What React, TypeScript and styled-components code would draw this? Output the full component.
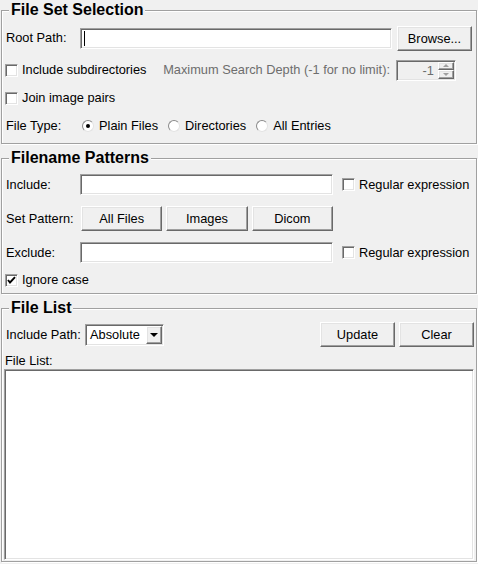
import React from "react";
import styled, { createGlobalStyle } from "styled-components";

const Global = createGlobalStyle`
  html, body { margin: 0; padding: 0; background: #f0f0f0; }
  body {
    font-family: "Liberation Sans", Arial, sans-serif;
    font-size: 12.8px;
    color: #000;
  }
  * { box-sizing: border-box; }
`;

const Page = styled.div`
  width: 478px;
  height: 564px;
  padding: 0 1px;
  display: flex;
  flex-direction: column;
  gap: 4px;
  background: #f0f0f0;
  overflow: hidden;
`;

const Group = styled.fieldset<{ $px: number; $pt: number; $pb: number }>`
  margin: 0;
  min-width: 0;
  padding: ${(p) => `${p.$pt}px ${p.$px}px ${p.$pb}px ${p.$px}px`};
  border: 1px solid #a0a0a0;
  box-shadow: inset 1px 1px #fff, 1px 1px #fff;
`;

const Title = styled.legend<{ $px: number }>`
  margin-left: ${(p) => 7 - p.$px}px;
  padding: 0 2px;
  font-family: "Liberation Sans", Arial, sans-serif;
  font-weight: bold;
  font-size: 16px;
  line-height: 20px;
  background: #f0f0f0;
`;

const Row = styled.div<{ $h: number; $mt?: number; $gap?: number }>`
  display: flex;
  align-items: center;
  height: ${(p) => p.$h}px;
  margin-top: ${(p) => p.$mt ?? 0}px;
  gap: ${(p) => p.$gap ?? 0}px;
`;

const Label = styled.span<{ $w?: number; $pl?: number }>`
  flex: none;
  width: ${(p) => (p.$w ? `${p.$w}px` : "auto")};
  padding-left: ${(p) => p.$pl ?? 0}px;
  white-space: nowrap;
  line-height: 16px;
`;

const DimLabel = styled.span`
  margin-left: auto;
  white-space: nowrap;
  color: #6d6d6d;
  line-height: 16px;
`;

const Sunken = `
  border: 1px solid;
  border-color: #a0a0a0 #fff #fff #a0a0a0;
  box-shadow: inset 1px 1px #696969, inset -1px -1px #e3e3e3;
`;

const Raised = `
  border: 1px solid;
  border-color: #fff #696969 #696969 #fff;
  box-shadow: inset -1px -1px #a0a0a0, inset 1px 1px #e3e3e3;
`;

const Field = styled.div<{ $w?: number }>`
  flex: ${(p) => (p.$w ? `0 0 ${p.$w}px` : "1 1 auto")};
  height: 21px;
  background: #fff;
  ${Sunken}
  display: flex;
  align-items: center;
  padding-left: 3px;
`;

const Caret = styled.span`
  width: 1px;
  height: 15px;
  background: #000;
`;

const Button = styled.button<{ $w?: number }>`
  flex: ${(p) => (p.$w ? `0 0 ${p.$w}px` : "1 1 0")};
  height: 25px;
  padding: 0;
  margin: 0;
  font: inherit;
  color: #000;
  background: #f0f0f0;
  ${Raised}
`;

const ButtonSet = styled.div`
  display: flex;
  gap: 4px;
  width: 252px;
  margin-left: 1px;
`;

const CheckItem = styled.label<{ $ml?: number }>`
  display: flex;
  align-items: center;
  gap: 4px;
  margin-left: ${(p) => p.$ml ?? -1}px;
  white-space: nowrap;
  line-height: 16px;
`;

const Box = styled.span`
  flex: none;
  width: 13px;
  height: 13px;
  background: #fff;
  ${Sunken}
  display: grid;
  place-items: center;
`;

const RadioGroup = styled.div`
  display: flex;
  align-items: center;
  gap: 10px;
  margin-left: 2px;
`;

const RadioItem = styled.label`
  display: flex;
  align-items: center;
  gap: 5px;
  white-space: nowrap;
  line-height: 16px;
`;

const RadioCircle = styled.span`
  flex: none;
  width: 12px;
  height: 12px;
  border-radius: 50%;
  background: #fff;
  border: 1px solid;
  border-color: #8a8a8a #e3e3e3 #e3e3e3 #8a8a8a;
  display: grid;
  place-items: center;
`;

const Dot = styled.span`
  width: 4px;
  height: 4px;
  border-radius: 50%;
  background: #000;
`;

const Spin = styled.div`
  flex: none;
  display: flex;
  width: 60px;
  height: 21px;
  margin: 0 16px 0 6px;
  background: #f0f0f0;
  ${Sunken}
  padding: 1px;
`;

const SpinText = styled.span`
  flex: 1;
  text-align: right;
  color: #6d6d6d;
  padding-right: 4px;
  line-height: 17px;
`;

const SpinButtons = styled.div`
  flex: none;
  width: 16px;
  display: flex;
  flex-direction: column;
`;

const SpinButton = styled.div`
  flex: 1;
  display: grid;
  place-items: center;
  background: #f0f0f0;
  ${Raised}
`;

const Arrow = styled.span<{ $dir: "up" | "down"; $color: string; $size: number }>`
  width: 0;
  height: 0;
  border-left: ${(p) => p.$size}px solid transparent;
  border-right: ${(p) => p.$size}px solid transparent;
  ${(p) =>
    p.$dir === "up"
      ? `border-bottom: ${p.$size}px solid ${p.$color};`
      : `border-top: ${p.$size}px solid ${p.$color};`}
`;

const Combo = styled.div`
  flex: none;
  width: 79px;
  height: 22px;
  display: flex;
  align-items: center;
  background: #fff;
  ${Sunken}
  padding: 1px;
`;

const ComboText = styled.span`
  flex: 1;
  padding-left: 3px;
  line-height: 16px;
`;

const ComboButton = styled.div`
  flex: none;
  width: 16px;
  height: 18px;
  display: grid;
  place-items: center;
  background: #f0f0f0;
  ${Raised}
`;

const Spacer = styled.div`
  flex: 1;
`;

const Caption = styled.div`
  margin-top: 6px;
  padding-left: 1px;
  line-height: 16px;
`;

const ListBox = styled.div`
  height: 191px;
  background: #fff;
  ${Sunken}
`;

function Check({ checked }: { checked?: boolean }) {
  return (
    <Box>
      {checked && (
        <svg width="9" height="9" viewBox="0 0 9 9">
          <polyline points="1,4 3,6.5 8,1.2" fill="none" stroke="#000" strokeWidth="1.9" />
        </svg>
      )}
    </Box>
  );
}

function Radio({ on, children }: { on?: boolean; children: React.ReactNode }) {
  return (
    <RadioItem>
      <RadioCircle>{on && <Dot />}</RadioCircle>
      {children}
    </RadioItem>
  );
}

export default function App() {
  return (
    <>
      <Global />
      <Page>
        <Group $px={4} $pt={5} $pb={7}>
          <Title $px={4}>File Set Selection</Title>
          <Row $h={26} $gap={5}>
            <Label $w={69}>Root Path:</Label>
            <Field>
              <Caret />
            </Field>
            <Button $w={75}>Browse...</Button>
          </Row>
          <Row $h={20} $mt={9}>
            <CheckItem>
              <Check />
              Include subdirectories
            </CheckItem>
            <DimLabel>Maximum Search Depth (-1 for no limit):</DimLabel>
            <Spin>
              <SpinText>-1</SpinText>
              <SpinButtons>
                <SpinButton>
                  <Arrow $dir="up" $color="#a0a0a0" $size={3} />
                </SpinButton>
                <SpinButton>
                  <Arrow $dir="down" $color="#a0a0a0" $size={3} />
                </SpinButton>
              </SpinButtons>
            </Spin>
          </Row>
          <Row $h={20} $mt={8}>
            <CheckItem>
              <Check />
              Join image pairs
            </CheckItem>
          </Row>
          <Row $h={20} $mt={8}>
            <Label $w={74}>File Type:</Label>
            <RadioGroup>
              <Radio on>Plain Files</Radio>
              <Radio>Directories</Radio>
              <Radio>All Entries</Radio>
            </RadioGroup>
          </Row>
        </Group>

        <Group $px={4} $pt={6} $pb={3}>
          <Title $px={4}>Filename Patterns</Title>
          <Row $h={21}>
            <Label $w={74}>Include:</Label>
            <Field $w={253} />
            <CheckItem $ml={9}>
              <Check />
              Regular expression
            </CheckItem>
          </Row>
          <Row $h={25} $mt={11}>
            <Label $w={74}>Set Pattern:</Label>
            <ButtonSet>
              <Button>All Files</Button>
              <Button>Images</Button>
              <Button>Dicom</Button>
            </ButtonSet>
          </Row>
          <Row $h={21} $mt={11}>
            <Label $w={74}>Exclude:</Label>
            <Field $w={253} />
            <CheckItem $ml={9}>
              <Check />
              Regular expression
            </CheckItem>
          </Row>
          <Row $h={20} $mt={7}>
            <CheckItem>
              <Check checked />
              Ignore case
            </CheckItem>
          </Row>
        </Group>

        <Group $px={2} $pt={4} $pb={1}>
          <Title $px={2}>File List</Title>
          <Row $h={25} $gap={4}>
            <Label $w={77} $pl={2}>Include Path:</Label>
            <Combo>
              <ComboText>Absolute</ComboText>
              <ComboButton>
                <Arrow $dir="down" $color="#000" $size={4} />
              </ComboButton>
            </Combo>
            <Spacer />
            <Button $w={75}>Update</Button>
            <Button $w={75}>Clear</Button>
          </Row>
          <Caption>File List:</Caption>
          <ListBox />
        </Group>
      </Page>
    </>
  );
}
